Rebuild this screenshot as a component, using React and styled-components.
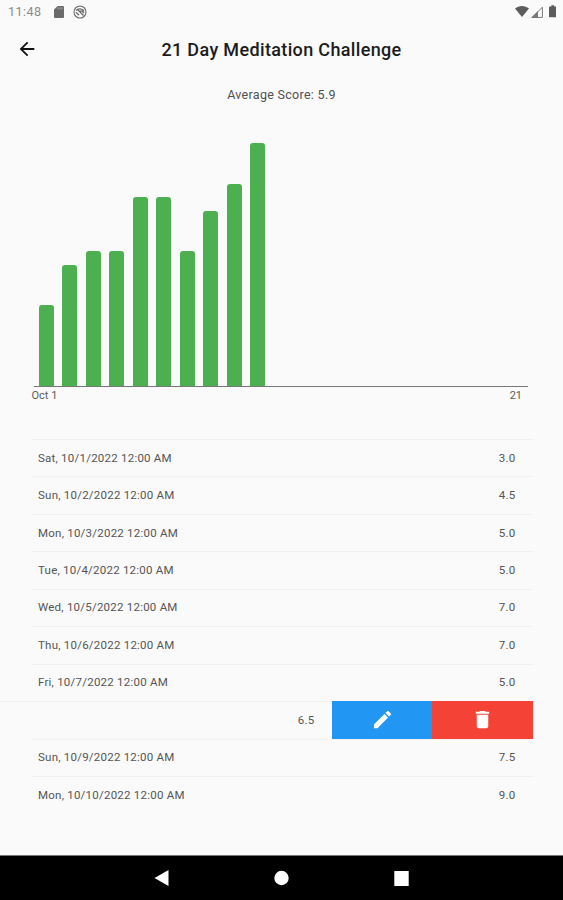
import React from "react";
import styled, { createGlobalStyle } from "styled-components";
import { MdArrowBack, MdEdit, MdDelete } from "react-icons/md";

const GlobalStyle = createGlobalStyle`
  * { box-sizing: border-box; }
  body { margin: 0; background: #fafafa; font-family: Roboto, "Liberation Sans", sans-serif; }
`;

const Screen = styled.main`
  display: flex;
  flex-direction: column;
  width: 563px;
  height: 900px;
  overflow: hidden;
  background: #fafafa;
  color: #555;
`;

const StatusBar = styled.div`
  display: flex;
  align-items: center;
  height: 24px;
  padding: 0 7px 1px 8px;
  color: #6b6b6b;
`;

const Clock = styled.span`
  width: 46px;
  font-size: 12.5px;
  letter-spacing: 0.5px;
  color: #8c8c8c;
`;

const StatusIcon = styled.svg`
  display: block;
  flex: none;
  width: ${(p) => p.$w}px;
  height: ${(p) => p.$h}px;
  margin-left: ${(p) => p.$gap || 0}px;
`;

const Spacer = styled.div`
  flex: 1;
`;

const AppBar = styled.header`
  display: grid;
  grid-template-columns: 53px 1fr 53px;
  align-items: center;
  height: 50px;
`;

const BackButton = styled.button`
  display: flex;
  justify-content: center;
  padding: 0;
  border: 0;
  background: none;
  color: #111;
  font-size: 22px;
`;

const Title = styled.h1`
  margin: 0;
  padding-top: 1px;
  text-align: center;
  font-size: 18px;
  font-weight: 500;
  line-height: 24px;
  letter-spacing: 0.35px;
  white-space: nowrap;
  color: #1c1c1c;
`;

const Average = styled.p`
  margin: 12px 0 0;
  text-align: center;
  font-size: 12.5px;
  line-height: 18px;
  letter-spacing: 0.3px;
  color: #505050;
`;

const Chart = styled.section`
  margin: 39px 35px 0 34px;
`;

const Plot = styled.div`
  display: flex;
  align-items: flex-end;
  gap: 8.5px;
  height: 243px;
  padding-left: 4.6px;
`;

const Bar = styled.div`
  width: 15px;
  height: ${(p) => p.$score * 27}px;
  border-radius: 3px 3px 0 0;
  background: #4caf50;
`;

const Axis = styled.div`
  display: flex;
  justify-content: space-between;
  height: 53px;
  padding: 1px 6px 0 0;
  border-top: 1px solid #777;
  font-size: 11px;
  line-height: 15px;
  color: #5c5c5c;
`;

const FirstTick = styled.span`
  margin-left: -2.5px;
`;

const List = styled.section`
  padding: 0 30px 0 32px;
`;

const Row = styled.div`
  display: flex;
  align-items: center;
  justify-content: space-between;
  height: 37.45px;
  padding: 0 17.5px 1px 6px;
  border-top: 1px solid #f1f1f1;
  font-size: 11.5px;
  letter-spacing: 0.23px;
  color: #555;
`;

const SwipedRow = styled.div`
  display: grid;
  grid-template-columns: 332px 100px 101px;
  height: 37.45px;
  margin-left: -32px;
`;

const SwipedContent = styled(Row)`
  justify-content: flex-end;
`;

const Action = styled.button`
  display: flex;
  align-items: center;
  justify-content: center;
  padding: 0 0 1px;
  border: 0;
  background: ${(p) => p.$color};
  color: #fff;
  font-size: 23px;
`;

const NavBar = styled.nav`
  display: flex;
  align-items: center;
  justify-content: center;
  gap: 105px;
  height: 45px;
  margin-top: auto;
  border-top: 1px solid #777;
  background: #000;
`;

const NavIcon = styled.svg`
  display: block;
  width: 15px;
  height: 16px;
  fill: #fff;
`;

const entries = [
  ["Sat, 10/1/2022 12:00 AM", 3],
  ["Sun, 10/2/2022 12:00 AM", 4.5],
  ["Mon, 10/3/2022 12:00 AM", 5],
  ["Tue, 10/4/2022 12:00 AM", 5],
  ["Wed, 10/5/2022 12:00 AM", 7],
  ["Thu, 10/6/2022 12:00 AM", 7],
  ["Fri, 10/7/2022 12:00 AM", 5],
  ["Sat, 10/8/2022 12:00 AM", 6.5, true],
  ["Sun, 10/9/2022 12:00 AM", 7.5],
  ["Mon, 10/10/2022 12:00 AM", 9],
];

export default function App() {
  return (
    <>
      <GlobalStyle />
      <Screen>
        <StatusBar>
          <Clock>11:48</Clock>
          <StatusIcon $w={10} $h={12} viewBox="0 0 10 12" aria-hidden="true">
            <path fill="currentColor" d="M3.600 0H9a1 1 0 0 1 1 1v10a1 1 0 0 1-1 1H1a1 1 0 0 1-1-1V3.600z" />
            <path stroke="#bbb" strokeWidth=".8" d="M4 1.300v2M6 1.300v2M8 1.300v2" />
          </StatusIcon>
          <StatusIcon $w={14} $h={14} $gap={8.5} viewBox="0 0 14 14" fill="none" stroke="currentColor" aria-hidden="true">
            <circle cx="7" cy="7" r="6" strokeWidth="1.1" />
            <path strokeWidth="1.300" d="M3 5.500C5 3.200 9 3.200 11 6M3 7.200l3 3M4 4l6.500 6.500M6 6.200h3.200L11 8" />
          </StatusIcon>
          <Spacer />
          <StatusIcon $w={14} $h={11} viewBox="0 0 14 11" aria-hidden="true">
            <path fill="#5c5c5c" d="M0 2.600C4-.8 10-.8 14 2.600L7 11z" />
          </StatusIcon>
          <StatusIcon $w={12} $h={12} $gap={2} viewBox="0 0 12 12" aria-hidden="true">
            <path fill="none" stroke="#777" d="M1.200 11.400 11.400 1.200v10.200z" />
            <path fill="#777" d="M0 12 7 5v7z" />
          </StatusIcon>
          <StatusIcon $w={7.5} $h={12.5} $gap={6} viewBox="0 0 8 13" aria-hidden="true">
            <path fill="#5c5c5c" d="M2.500 0h3v1.300H7a1 1 0 0 1 1 1V12a1 1 0 0 1-1 1H1a1 1 0 0 1-1-1V2.300a1 1 0 0 1 1-1h1.500z" />
          </StatusIcon>
        </StatusBar>
        <AppBar>
          <BackButton aria-label="Back"><MdArrowBack /></BackButton>
          <Title>21 Day Meditation Challenge</Title>
        </AppBar>
        <Average>Average Score: 5.9</Average>
        <Chart>
          <Plot>
            {entries.map(([date, score]) => <Bar key={date} $score={score} />)}
          </Plot>
          <Axis>
            <FirstTick>Oct 1</FirstTick>
            <span>21</span>
          </Axis>
        </Chart>
        <List>
          {entries.map(([date, score, swiped]) =>
            swiped ? (
              <SwipedRow key={date}>
                <SwipedContent>{score.toFixed(1)}</SwipedContent>
                <Action $color="#2196f3" aria-label="Edit"><MdEdit /></Action>
                <Action $color="#f44336" aria-label="Delete"><MdDelete /></Action>
              </SwipedRow>
            ) : (
              <Row key={date}>
                <span>{date}</span>
                <span>{score.toFixed(1)}</span>
              </Row>
            )
          )}
        </List>
        <NavBar>
          <NavIcon viewBox="0 0 15 16"><path d="M.5 8 14.500 0v16z" /></NavIcon>
          <NavIcon viewBox="0 0 15 16"><circle cx="7.500" cy="8" r="7.200" /></NavIcon>
          <NavIcon viewBox="0 0 15 16"><rect x=".3" y="1" width="14.400" height="15" rx=".6" /></NavIcon>
        </NavBar>
      </Screen>
    </>
  );
}
